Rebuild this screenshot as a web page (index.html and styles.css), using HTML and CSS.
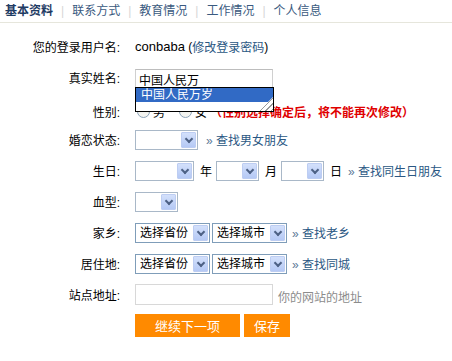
FILE: index.html
```html
<!DOCTYPE html>
<html lang="zh-CN">
<head>
    <meta charset="UTF-8">
    <title>基本资料</title>
    <link rel="stylesheet" href="styles.css">
</head>
<body>
    <div class="tabs">
        <a class="tab tab-on">基本资料</a><span class="sep">|</span>
        <a class="tab">联系方式</a><span class="sep">|</span>
        <a class="tab">教育情况</a><span class="sep">|</span>
        <a class="tab">工作情况</a><span class="sep">|</span>
        <a class="tab">个人信息</a>
    </div>

    <form class="profile">
        <div class="row">
            <span class="lbl">您的登录用户名:</span>
            <div class="val"><span class="latin">conbaba</span>&nbsp;(<a class="link">修改登录密码</a>)</div>
        </div>

        <div class="row">
            <span class="lbl">真实姓名:</span>
            <div class="val">
                <div class="name-wrap">
                    <input class="text name-input" type="text" value="中国人民万">
                    <!-- browser autocomplete popup -->
                    <div class="suggest">
                        <div class="suggest-item">中国人民万岁</div>
                        <div class="grip"></div>
                    </div>
                </div>
            </div>
        </div>

        <div class="row row-sex">
            <span class="lbl">性别:</span>
            <div class="val">
                <span class="radio"></span><span class="radio-txt">男</span>
                <span class="radio"></span><span class="radio-txt">女</span>
                <span class="warn">（性别选择确定后，将不能再次修改）</span>
            </div>
        </div>

        <div class="row">
            <span class="lbl">婚恋状态:</span>
            <div class="val">
                <span class="sel sel-empty w63"><span class="sel-txt"></span><span class="sel-btn"></span></span>
                <a class="link more"><span class="raquo">»</span> 查找男女朋友</a>
            </div>
        </div>

        <div class="row">
            <span class="lbl">生日:</span>
            <div class="val">
                <span class="sel sel-empty w59"><span class="sel-txt"></span><span class="sel-btn"></span></span>
                <span class="unit">年</span>
                <span class="sel sel-empty w43"><span class="sel-txt"></span><span class="sel-btn"></span></span>
                <span class="unit">月</span>
                <span class="sel sel-empty w43"><span class="sel-txt"></span><span class="sel-btn"></span></span>
                <span class="unit">日</span>
                <a class="link more-bday"><span class="raquo">»</span> 查找同生日朋友</a>
            </div>
        </div>

        <div class="row">
            <span class="lbl">血型:</span>
            <div class="val">
                <span class="sel sel-empty w43"><span class="sel-txt"></span><span class="sel-btn"></span></span>
            </div>
        </div>

        <div class="row">
            <span class="lbl">家乡:</span>
            <div class="val">
                <span class="sel w75"><span class="sel-txt">选择省份</span><span class="sel-btn"></span></span>
                <span class="sel w75"><span class="sel-txt">选择城市</span><span class="sel-btn"></span></span>
                <a class="link more-tight"><span class="raquo">»</span> 查找老乡</a>
            </div>
        </div>

        <div class="row">
            <span class="lbl">居住地:</span>
            <div class="val">
                <span class="sel w75"><span class="sel-txt">选择省份</span><span class="sel-btn"></span></span>
                <span class="sel w75"><span class="sel-txt">选择城市</span><span class="sel-btn"></span></span>
                <a class="link more-tight"><span class="raquo">»</span> 查找同城</a>
            </div>
        </div>

        <div class="row">
            <span class="lbl">站点地址:</span>
            <div class="val">
                <input class="text site-input" type="text">
                <span class="hint">你的网站的地址</span>
            </div>
        </div>

        <div class="row">
            <span class="lbl"></span>
            <div class="val">
                <button type="button" class="btn btn-next">继续下一项</button>
                <button type="button" class="btn btn-save">保存</button>
            </div>
        </div>
    </form>
</body>
</html>
```

FILE: styles.css
```css
body {
    margin: 0;
    background: #fff;
    font-family: "Liberation Sans", "Noto Sans CJK SC", sans-serif;
    font-size: 12px;
    color: #000;
}
.tabs {
    height: 22px;
    padding-left: 5px;
    display: flex;
    align-items: center;
    border-bottom: 1px solid #e6e6dc;
    line-height: 14px;
}
.tab {
    color: #3a5a80;
    cursor: pointer;
}
.tab-on {
    color: #1f3c64;
    font-weight: bold;
}
.sep {
    color: #d6d6d6;
    margin: 0 8px;
}
.profile {
    padding-top: 8px;
}
.row {
    display: flex;
    align-items: center;
    height: 31px;
}
.row-sex {
    padding-top: 6px;
    height: 25px;
}
.lbl {
    width: 120px;
    text-align: right;
    color: #000;
    flex-shrink: 0;
}
.val {
    margin-left: 15px;
    display: flex;
    align-items: center;
    white-space: nowrap;
    flex-shrink: 0;
}
.val > * {
    flex-shrink: 0;
}
.latin {
    font-size: 13px;
}
.link {
    color: #2a5783;
    cursor: pointer;
}
.raquo {
    color: #5a7896;
}
.more {
    margin-left: 8px;
}
.more-bday {
    margin-left: 2px;
}
.more-tight {
    margin-left: 3px;
}
.text {
    box-sizing: border-box;
    margin: 0;
    padding: 1px 3px 0;
    font: inherit;
    border: 1px solid #d0d0d0;
    border-top-color: #bdbdbd;
    outline: none;
}
.name-input {
    width: 138px;
    height: 19px;
    font-size: 12px;
}
.name-wrap {
    position: relative;
    top: 1px;
}
.suggest {
    position: absolute;
    left: 0;
    top: 18px;
    width: 139px;
    height: 25px;
    box-sizing: border-box;
    border: 1px solid #000;
    background: #fff;
    z-index: 2;
}
.suggest-item {
    height: 14px;
    line-height: 14px;
    padding-left: 5px;
    background: #316ac5;
    color: #fff;
}
.grip {
    position: absolute;
    right: 0;
    bottom: 0;
    width: 14px;
    height: 14px;
    background: repeating-linear-gradient(135deg, #fff 0 2px, #9a9a9a 2px 3px, #fff 3px 4px);
    clip-path: polygon(100% 0, 100% 100%, 0 100%);
}
.radio {
    width: 11px;
    height: 11px;
    border: 1px solid #8ca3b8;
    border-radius: 50%;
    background: #f4f4f0;
    margin-left: 2px;
}
.radio-txt {
    margin-left: 3px;
    margin-right: 12px;
}
.warn {
    color: #e00000;
    font-weight: bold;
    margin-left: -9px;
}
.sel {
    box-sizing: border-box;
    height: 20px;
    border: 1px solid #7f9db9;
    display: inline-flex;
    align-items: center;
    justify-content: space-between;
    background: #fff;
    padding: 1px;
}
.sel-empty {
    border-color: #a9b8c8;
}
.sel-txt {
    padding-left: 3px;
    line-height: 16px;
    white-space: nowrap;
}
.sel-btn {
    width: 15px;
    height: 16px;
    box-sizing: border-box;
    border: 1px solid #bdcdf2;
    border-radius: 1px;
    background: linear-gradient(#d3e0fb, #b5c9f5);
    position: relative;
}
.sel-btn::after {
    content: "";
    position: absolute;
    left: 4px;
    top: 3px;
    width: 4px;
    height: 4px;
    border-right: 2px solid #4d6185;
    border-bottom: 2px solid #4d6185;
    transform: rotate(45deg);
}
.w43 { width: 43px; }
.w59 { width: 59px; }
.w63 { width: 63px; }
.w75 { width: 75px; margin-right: 2px; }
.unit {
    margin: 0 4px 0 6px;
}
.site-input {
    width: 138px;
    height: 21px;
    border-color: #d8d8d8;
}
.hint {
    color: #8c8c8c;
    margin-left: 5px;
    padding-top: 4px;
}
.btn {
    height: 23px;
    border: none;
    background: #ff8a00;
    color: #fff;
    font: inherit;
    font-size: 13px;
    cursor: pointer;
    padding: 0;
}
.btn-next {
    width: 105px;
}
.btn-save {
    width: 46px;
    margin-left: 4px;
}
```
